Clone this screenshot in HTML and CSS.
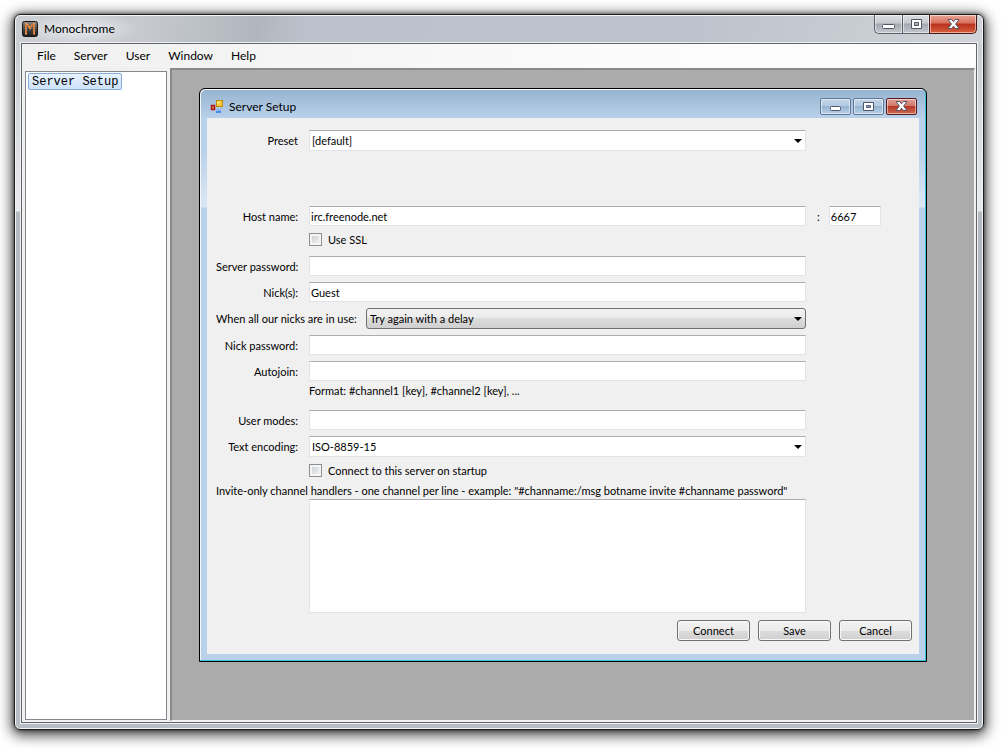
FILE: index.html
```html
<!DOCTYPE html>
<html lang="en">
<head>
<meta charset="UTF-8" />
<meta name="viewport" content="width=device-width, initial-scale=1" />
<title>Monochrome</title>
<link rel="stylesheet" href="styles.css">
</head>
<body>
  <div class="window">
    <header class="titlebar">
      <svg class="app-icon" viewBox="0 0 16 16" aria-hidden="true">
        <defs>
          <linearGradient id="iconBg" x1="0" y1="0" x2="0" y2="1">
            <stop offset="0" stop-color="#8a8a8a" />
            <stop offset="0.5" stop-color="#484848" />
            <stop offset="1" stop-color="#1c1c1c" />
          </linearGradient>
        </defs>
        <rect x="0.5" y="0.5" width="15" height="15" rx="2" fill="url(#iconBg)" stroke="#1a1512" />
        <path d="M4 2v12M12 2v12M5 3l3 4 3-4" fill="none" stroke="#9a5a2c" stroke-width="2" />
        <path d="M4 2v12M12 2v12M5 3l3 4 3-4" fill="none" stroke="#f59a50" stroke-width="2" stroke-dasharray="1.4 1" />
      </svg>
      <h1 class="title">Monochrome</h1>
      <div class="caption">
        <button type="button" class="min" aria-label="Minimize">
          <svg viewBox="0 0 13 11"><rect x="0.5" y="5.5" width="12" height="4" rx="1" fill="#fff" stroke="#535666" /></svg>
        </button>
        <button type="button" class="max" aria-label="Maximize">
          <svg viewBox="0 0 13 11"><path d="M1.500 .5h10v9h-10zM4.500 3.500v3h4v-3z" fill="#fff" fill-rule="evenodd" stroke="#535666" /></svg>
        </button>
        <button type="button" class="close" aria-label="Close">
          <svg viewBox="0 0 13 11"><path d="M1 .5h3.500l2 2.300 2-2.300H12L8.600 5 12 9.500H8.500l-2-2.300-2 2.300H1L4.400 5z" fill="#fff" stroke="#535666" /></svg>
        </button>
      </div>
    </header>

    <div class="client">
      <nav class="menubar">
        <button type="button">File</button>
        <button type="button">Server</button>
        <button type="button">User</button>
        <button type="button">Window</button>
        <button type="button">Help</button>
      </nav>

      <div class="workspace">
        <aside class="tree">
          <button type="button" class="tree-item">Server Setup</button>
        </aside>

        <main class="mdi">
          <section class="dialog">
            <header class="dialog-titlebar">
              <svg class="form-icon" viewBox="0 0 14 14" aria-hidden="true">
                <rect x="6.500" y="0.500" width="6" height="6" fill="#f8c830" stroke="#c08a10" />
                <path d="M7.500 1.500h3l-3 3z" fill="#fff0a0" />
                <rect x="1.500" y="5.500" width="3" height="4" fill="#e88070" stroke="#a81c10" stroke-width="1.500" />
                <rect x="6" y="9" width="5" height="4" fill="#4a8ae8" />
                <path d="M6 9h5v2H6z" fill="#8ab8f8" />
              </svg>
              <h2 class="title">Server Setup</h2>
              <div class="caption">
                <button type="button" class="min" aria-label="Minimize">
                  <svg viewBox="0 0 13 11"><rect x="1.500" y="5.500" width="10" height="4" rx="1" fill="#fff" stroke="#535666" /></svg>
                </button>
                <button type="button" class="max" aria-label="Maximize">
                  <svg viewBox="0 0 13 11"><path d="M1.500 1.500h10v8h-10zM4.500 4.500v2h4v-2z" fill="#fff" fill-rule="evenodd" stroke="#535666" /></svg>
                </button>
                <button type="button" class="close" aria-label="Close">
                  <svg viewBox="0 0 13 11"><path d="M1 .5h3.500l2 2.300 2-2.300H12L8.600 5 12 9.500H8.500l-2-2.300-2 2.300H1L4.400 5z" fill="#fff" stroke="#535666" /></svg>
                </button>
              </div>
            </header>

            <form class="form">
              <div class="row row-preset">
                <label for="preset">Preset</label>
                <div class="select">
                  <select id="preset"><option>[default]</option></select>
                </div>
              </div>
              <div class="row">
                <label for="host">Host name:</label>
                <input type="text" id="host" value="irc.freenode.net" />
                <div class="port">
                  <label for="port">:</label>
                  <input type="text" id="port" value="6667" />
                </div>
              </div>
              <div class="row">
                <label class="check"><input type="checkbox" /> Use SSL</label>
              </div>
              <div class="row">
                <label for="serverPassword">Server password:</label>
                <input type="password" id="serverPassword" />
              </div>
              <div class="row">
                <label for="nicks">Nick(s):</label>
                <input type="text" id="nicks" value="Guest" />
              </div>
              <div class="row row-wide">
                <label for="nickPolicy">When all our nicks are in use:</label>
                <div class="select select-button">
                  <select id="nickPolicy"><option>Try again with a delay</option></select>
                </div>
              </div>
              <div class="row">
                <label for="nickPassword">Nick password:</label>
                <input type="password" id="nickPassword" />
              </div>
              <div class="row">
                <label for="autojoin">Autojoin:</label>
                <input type="text" id="autojoin" />
                <p class="hint">Format: #channel1 [key], #channel2 [key], ...</p>
              </div>
              <div class="row">
                <label for="modes">User modes:</label>
                <input type="text" id="modes" />
              </div>
              <div class="row">
                <label for="encoding">Text encoding:</label>
                <div class="select">
                  <select id="encoding"><option>ISO-8859-15</option></select>
                </div>
              </div>
              <div class="row row-startup">
                <label class="check"><input type="checkbox" /> Connect to this server on startup</label>
              </div>
              <label class="invite-label" for="invite">Invite-only channel handlers - one channel per line - example: "#channame:/msg botname invite #channame password"</label>
              <div class="row">
                <textarea id="invite"></textarea>
              </div>
              <div class="actions">
                <button type="button">Connect</button>
                <button type="button">Save</button>
                <button type="button">Cancel</button>
              </div>
            </form>
          </section>
        </main>
      </div>
    </div>
  </div>
</body>
</html>
```
FILE: styles.css
```css
* {
  box-sizing: border-box;
}
body {
  margin: 0;
  padding: 14px 18px 18px 14px;
  min-height: 100vh;
  display: flex;
  background: #fff;
  color: #000;
  font-family: Lato, "Liberation Sans", Arial, sans-serif;
  font-size: 11px;
}
button, input, select, textarea {
  font: inherit;
  color: inherit;
}

/* Main window */
.window {
  flex: 1;
  display: flex;
  flex-direction: column;
  padding: 0 6px 6px;
  border: 1px solid #1c1c20;
  border-radius: 6px;
  background:
    radial-gradient(60px 16px at 65px 14px, rgba(240, 242, 244, 0.8), transparent) 0 0 / 100% 28px no-repeat,
    linear-gradient(100deg, #ccd0d5 0, #c6cacf 130px, #b1b6be 240px, #bcc1cb 290px, #bdc3cc 70%, #d0d4d9 100%) 0 0 / 100% 28px no-repeat,
    linear-gradient(#c9cdd2 28px, #e9eaec 196px, #b4bac1 197px, #b6bdc4 100%);
  box-shadow:
    inset 0 0 0 1px #f2f4f6,
    0 0 4px rgba(0, 0, 0, 0.6),
    0 3px 14px 2px rgba(0, 0, 0, 0.75);
}
.titlebar {
  display: flex;
  align-items: center;
  height: 28px;
  padding-left: 1px;
}
.title {
  flex: 1;
  margin: 0;
  padding-bottom: 1px;
  font-size: 12px;
  font-weight: 400;
}
.app-icon {
  width: 16px;
  height: 16px;
  margin-right: 6px;
}

/* Caption buttons */
.caption {
  display: flex;
  align-self: flex-start;
}
.caption button {
  display: flex;
  align-items: center;
  justify-content: center;
  height: 19px;
  padding: 0;
  border: 1px solid #5c606a;
  background: linear-gradient(#dcdfe3, #c6cad0 45%, #a3a8b0 50%, #c3c8ce);
  box-shadow: inset 0 0 0 1px rgba(255, 255, 255, 0.5);
}
.caption svg {
  width: 13px;
  height: 11px;
}
.titlebar .caption button {
  width: 27px;
  border-top: 0;
  border-right: 0;
}
.titlebar .caption .min {
  width: 28px;
  border-radius: 0 0 0 5px;
}
.titlebar .caption .close {
  width: 48px;
  border: 1px solid #4a1714;
  border-top: 0;
  border-radius: 0 0 5px 0;
}
.caption .close {
  background: linear-gradient(#e9a596, #d9705c 45%, #b8301c 50%, #d8603e);
}

/* Client area */
.client {
  flex: 1;
  display: flex;
  flex-direction: column;
  border: 1px solid #626468;
  outline: 1px solid #f0f1f3;
  background: #f0f0f0;
}
.menubar {
  display: flex;
  height: 24px;
  padding-left: 6px;
  background: linear-gradient(90deg, #f0f0f0, #fcfcfc 70%);
}
.menubar button {
  padding: 0 9px 2px;
  border: 0;
  background: none;
  font-size: 12px;
}
.workspace {
  flex: 1;
  display: flex;
  gap: 3px;
  padding: 0 1px 1px 3px;
}
.tree {
  width: 142px;
  margin: 3px 0 1px;
  padding: 1px 2px;
  border: 1px solid #828790;
  background: #fff;
}
.tree-item {
  display: block;
  height: 17px;
  padding: 1px 3px 0;
  border: 1px solid #84acdd;
  border-radius: 2px;
  background: linear-gradient(#e8f2fe, #cde2fc);
  font-family: "Liberation Mono", "Courier New", monospace;
  font-size: 12px;
  line-height: 15px;
}
.mdi {
  flex: 1;
  position: relative;
  border: 2px solid;
  border-color: #8a8a8a #f4f4f4 #f4f4f4 #8a8a8a;
  border-right-width: 1px;
  border-bottom-width: 1px;
  background: #ababab;
}

/* Child window */
.dialog {
  position: absolute;
  left: 27px;
  top: 18px;
  width: 728px;
  padding: 0 7px 7px;
  border: 1px solid #000;
  border-radius: 6px 6px 0 0;
  background: linear-gradient(#97b3d0, #b9d1ea 29px, #b9d1ea 60px, #dce7f4 118px, #b9d1ea 119px);
  box-shadow: inset -1px -1px #35c3dd, inset 1px 1px #f4f8fc;
}
.dialog-titlebar {
  display: flex;
  align-items: center;
  height: 29px;
  padding: 6px 2px 0 3px;
}
.form-icon {
  width: 14px;
  height: 14px;
  margin-right: 5px;
}
.dialog-titlebar .caption {
  gap: 2px;
  margin-top: 3px;
}
.dialog-titlebar .caption button {
  width: 31px;
  height: 17px;
  border-color: #5f7897;
  border-radius: 2px;
  background: linear-gradient(#c3d5e8, #b3cae2 45%, #98b4d1 50%, #b5cfe8);
}
.dialog-titlebar .caption .close {
  border-color: #571a1e;
  background: linear-gradient(#e3a096, #d07a6c 45%, #b53a26 50%, #cd6a50);
}

/* Form */
.form {
  padding: 12px 7px 13px 9px;
  background: #f0f0f0;
}
.row {
  display: grid;
  grid-template-columns: 82px 1fr 95px;
  column-gap: 11px;
  align-items: center;
  margin-bottom: 6px;
}
.row > label {
  text-align: right;
  white-space: nowrap;
}
.row-preset {
  margin-bottom: 55px;
}
.row-wide {
  grid-template-columns: 139px 1fr 95px;
}
.row .check {
  grid-column: 2;
  display: flex;
  align-items: center;
  gap: 6px;
  height: 18px;
  padding-bottom: 3px;
  text-align: left;
}
.row-startup {
  margin-bottom: 2px;
}
.form input[type="text"],
.form input[type="password"],
.form select,
textarea {
  width: 100%;
  height: 20px;
  padding: 0 1px;
  border: 1px solid #e2e3ea;
  border-top-color: #abadb3;
  border-radius: 1px;
  background: #fff;
  outline: 0;
}
.form select {
  display: block;
  appearance: none;
  height: 21px;
  padding: 0 2px;
}
.select {
  position: relative;
}
.select::after {
  content: "";
  position: absolute;
  right: 4px;
  top: 9px;
  width: 8px;
  height: 4px;
  background: #000;
  clip-path: polygon(0 0, 100% 0, 50% 100%);
  pointer-events: none;
}
.form .select-button select {
  padding: 0 3px;
  border: 1px solid #707070;
  border-radius: 3px;
  background: linear-gradient(#f2f2f2, #ebebeb 50%, #dddddd 50%, #cfcfcf);
}
.port {
  display: flex;
  align-items: center;
  gap: 9px;
}
.form .port input {
  width: 52px;
}
input[type="checkbox"] {
  appearance: none;
  width: 13px;
  height: 13px;
  margin: 0;
  border: 1px solid #8e8f8f;
  background: linear-gradient(135deg, #c6cacf, #f6f6f6);
  box-shadow: inset 0 0 0 2px #f4f4f4;
}
.hint {
  grid-column: 2;
  margin: 0 0 3px;
  line-height: 20px;
}
.invite-label {
  display: block;
  line-height: 16px;
  white-space: nowrap;
}
.row textarea {
  grid-column: 2;
  display: block;
  height: 114px;
  resize: none;
}
.actions {
  display: flex;
  justify-content: flex-end;
  gap: 8px;
  padding-top: 1px;
}
.actions button {
  width: 73px;
  height: 21px;
  padding: 0;
  border: 1px solid #707070;
  border-radius: 3px;
  background: linear-gradient(#f2f2f2, #ebebeb 50%, #dddddd 50%, #cfcfcf);
  box-shadow: inset 0 0 0 1px #f8f8f8;
}
```
